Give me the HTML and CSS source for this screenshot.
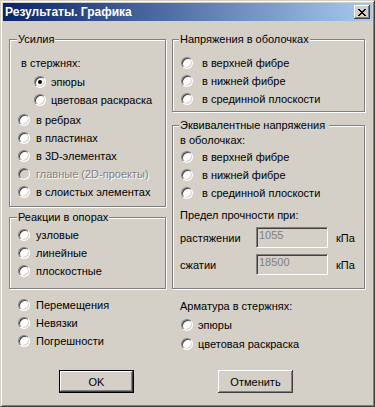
FILE: index.html
```html
<!DOCTYPE html>
<html lang="ru">
<head>
    <meta charset="UTF-8">
    <title>Результаты. Графика</title>
    <link rel="stylesheet" href="styles.css">
</head>
<body>
    <div class="window">
        <div class="titlebar">
            <span class="title">Результаты. Графика</span>
            <button class="close" type="button">
                <svg width="8" height="7" viewBox="0 0 8 7" shape-rendering="crispEdges">
                    <path fill="#000" d="M0 0h2v1H0z M6 0h2v1H6z M1 1h2v1H1z M5 1h2v1H5z M2 2h4v1H2z M3 3h2v1H3z M2 4h4v1H2z M1 5h2v1H1z M5 5h2v1H5z M0 6h2v1H0z M6 6h2v1H6z"/>
                </svg>
            </button>
        </div>

        <div class="content">
            <div class="columns">
                <!-- left column -->
                <div class="col">
                    <fieldset class="group forces">
                        <legend>Усилия</legend>
                        <div class="caption indent">в стержнях:</div>
                        <div class="opt sub first"><span class="radio on"></span>эпюры</div>
                        <div class="opt sub"><span class="radio"></span>цветовая раскраска</div>
                        <div class="opt first"><span class="radio"></span>в ребрах</div>
                        <div class="opt"><span class="radio"></span>в пластинах</div>
                        <div class="opt"><span class="radio"></span>в 3D-элементах</div>
                        <div class="opt off"><span class="radio"></span>главные (2D-проекты)</div>
                        <div class="opt"><span class="radio"></span>в слоистых элементах</div>
                    </fieldset>

                    <fieldset class="group reactions">
                        <legend>Реакции в опорах</legend>
                        <div class="opt"><span class="radio"></span>узловые</div>
                        <div class="opt"><span class="radio"></span>линейные</div>
                        <div class="opt"><span class="radio"></span>плоскостные</div>
                    </fieldset>

                    <div class="loose">
                        <div class="opt"><span class="radio"></span>Перемещения</div>
                        <div class="opt"><span class="radio"></span>Невязки</div>
                        <div class="opt"><span class="radio"></span>Погрешности</div>
                    </div>
                </div>

                <!-- right column -->
                <div class="col">
                    <fieldset class="group shells">
                        <legend>Напряжения в оболочках</legend>
                        <div class="opt wide"><span class="radio"></span>в верхней фибре</div>
                        <div class="opt wide"><span class="radio"></span>в нижней фибре</div>
                        <div class="opt wide"><span class="radio"></span>в срединной плоскости</div>
                    </fieldset>

                    <fieldset class="group equiv">
                        <legend>Эквивалентные напряжения&nbsp;</legend>
                        <div class="caption">в оболочках:</div>
                        <div class="opt wide"><span class="radio"></span>в верхней фибре</div>
                        <div class="opt wide"><span class="radio"></span>в нижней фибре</div>
                        <div class="opt wide"><span class="radio"></span>в срединной плоскости</div>
                        <div class="caption limit">Предел прочности при:</div>
                        <div class="field-row">
                            <span>растяжении</span>
                            <div class="edit">1055</div>
                            <span class="unit">кПа</span>
                        </div>
                        <div class="field-row second">
                            <span>сжатии</span>
                            <div class="edit">18500</div>
                            <span class="unit">кПа</span>
                        </div>
                    </fieldset>

                    <div class="rebar">
                        <div class="caption">Арматура в стержнях:</div>
                        <div class="opt rebar-opt"><span class="radio"></span>эпюры</div>
                        <div class="opt rebar-opt last"><span class="radio"></span>цветовая раскраска</div>
                    </div>
                </div>
            </div>

            <div class="buttons">
                <div class="btn-cell ok-cell"><button class="btn default" type="button">OK</button></div>
                <div class="btn-cell cancel-cell"><button class="btn" type="button">Отменить</button></div>
            </div>
        </div>
    </div>
</body>
</html>
```

FILE: styles.css
```css
* {
    box-sizing: border-box;
}

body {
    margin: 0;
    background: #d4d0c8;
    font-family: "Liberation Sans", Arial, sans-serif;
    font-size: 11px;
    color: #000;
}

.window {
    width: 375px;
    height: 407px;
    background: #d4d0c8;
    border: 1px solid;
    border-color: #d4d0c8 #404040 #404040 #d4d0c8;
    box-shadow: inset 1px 1px 0 #fff, inset -1px -1px 0 #808080;
    padding: 2px;
}

/* title bar */
.titlebar {
    height: 18px;
    display: flex;
    align-items: center;
    padding: 0 2px;
    background: linear-gradient(to right, #0a246a, #a6caf0);
}

.title {
    color: #fff;
    font-weight: bold;
    font-size: 12px;
    line-height: 14px;
}

.close {
    margin-left: auto;
    width: 16px;
    height: 14px;
    padding: 0;
    border: none;
    background: #d4d0c8;
    display: flex;
    justify-content: center;
    align-items: center;
    box-shadow: inset -1px -1px 0 #404040, inset 1px 1px 0 #fff, inset -2px -2px 0 #808080;
}

/* dialog body */
.content {
    padding: 12px 7px 0 6px;
}

.columns {
    display: grid;
    grid-template-columns: 157px 193px;
    column-gap: 6px;
    align-items: start;
}

.group {
    margin: 0;
    min-width: 0;
    border: 1px solid #808080;
    box-shadow: 1px 1px 0 #fff, inset 1px 1px 0 #fff;
}

.group legend {
    padding: 0 1px;
    margin-left: -1px;
    line-height: 13px;
    background: #d4d0c8;
}

.forces { padding: 9px 8px 5px 8px; }
.reactions { margin-top: 4px; padding: 2px 8px 8px 8px; }
.shells { padding: 8px 7px 3px 7px; }
.equiv { margin-top: 7px; padding: 0 7px 13px 7px; }

.caption {
    line-height: 16px;
    height: 16px;
}

.caption.indent { margin-left: 3px; }
.caption.limit { margin-top: 5px; }

/* radio rows */
.opt {
    display: flex;
    align-items: center;
    gap: 6px;
    height: 18px;
    white-space: nowrap;
}

.opt.first { margin-top: 2px; }
.opt.sub { margin-left: 16px; gap: 5px; }
.opt.wide { margin-left: 1px; gap: 9px; }

.loose {
    margin-top: 7px;
    padding-left: 9px;
}

.rebar {
    margin-top: 9px;
    padding-left: 8px;
}

.opt.rebar-opt { margin-left: 1px; gap: 5px; margin-top: 2px; }
.opt.rebar-opt.last { margin-top: 1px; }

.radio {
    position: relative;
    flex: none;
    width: 12px;
    height: 12px;
    border-radius: 50%;
    border: 1px solid;
    border-color: #808080 #fff #fff #808080;
    background: #fff;
    box-shadow: inset 1px 1px 0 #404040, inset -1px -1px 0 #d4d0c8;
}

.radio.on::after {
    content: "";
    position: absolute;
    left: 3px;
    top: 3px;
    width: 4px;
    height: 4px;
    border-radius: 50%;
    background: #000;
}

.opt.off {
    color: #808080;
    text-shadow: 1px 1px 0 #fff;
}

.opt.off .radio {
    background: #d4d0c8;
}

/* strength limit fields */
.field-row {
    display: grid;
    grid-template-columns: 76px 72px auto;
    align-items: center;
    height: 21px;
    margin-top: 4px;
}

.field-row.second { margin-top: 6px; }

.edit {
    height: 21px;
    border: 1px solid;
    border-color: #808080 #fff #fff #808080;
    box-shadow: inset 1px 1px 0 #404040, inset -1px -1px 0 #d4d0c8;
    background: #d4d0c8;
    color: #808080;
    padding: 1px 0 0 2px;
    line-height: 13px;
}

.unit {
    padding-left: 8px;
}

/* buttons */
.buttons {
    display: grid;
    grid-template-columns: 157px 193px;
    column-gap: 6px;
    margin-top: 17px;
}

.ok-cell { padding-left: 50px; }
.cancel-cell { padding-left: 46px; }

.btn {
    width: 75px;
    height: 23px;
    padding: 0;
    border: none;
    background: #d4d0c8;
    font-family: "Liberation Sans", Arial, sans-serif;
    font-size: 11px;
    color: #000;
    box-shadow: inset -1px -1px 0 #404040, inset 1px 1px 0 #fff, inset -2px -2px 0 #808080;
}

.btn.default {
    border: 1px solid #000;
}
```
